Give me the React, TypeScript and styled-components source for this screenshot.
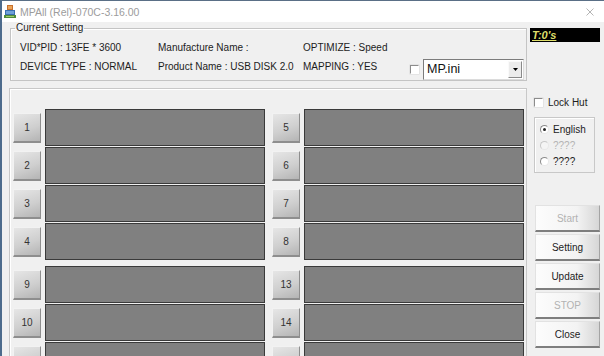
import React from 'react';
import styled, { createGlobalStyle } from 'styled-components';

const GlobalStyle = createGlobalStyle`
  html, body {
    margin: 0;
    padding: 0;
    background: #f0f0f0;
  }
  body {
    font-family: 'Liberation Sans Narrow', 'Liberation Sans', Arial, sans-serif;
    font-size: 10px;
    color: #1c1c1c;
  }
  #root {
    width: 604px;
    height: 356px;
    overflow: hidden;
  }
`;

const Window = styled.div`
  width: 604px;
  height: 356px;
  box-sizing: border-box;
  display: flex;
  flex-direction: column;
  background: #f0f0f0;
  border-left: 2px solid #4d6b8c;
  border-top: 1px solid #5a6f86;
  overflow: hidden;
`;

const TitleBar = styled.div`
  height: 21px;
  flex: none;
  display: flex;
  align-items: center;
  padding: 0 10px 0 2px;
  background: #ffffff;
`;

const Title = styled.span`
  margin-left: 4px;
  font-size: 10.5px;
  color: #9c9c9c;
`;

const CloseBtn = styled.svg`
  margin-left: auto;
`;

const Body = styled.div`
  flex: 1;
  display: flex;
  padding: 0 4px 0 7px;
  min-height: 0;
`;

const MainCol = styled.div`
  width: 518px;
  display: flex;
  flex-direction: column;
`;

const GroupBox = styled.fieldset`
  margin: 0 0 0 1px;
  padding: 0 2px 1px 9px;
  border: 1px solid #c4c4c4;
  box-shadow: inset 1px 1px 0 #ffffff;
  min-width: 0;
`;

const Legend = styled.legend`
  margin-left: -5px;
  padding: 0 1px;
  line-height: 12px;
  font-size: 10px;
`;

const SettingGrid = styled.div`
  display: grid;
  grid-template-columns: 138px 145px 1fr;
  grid-template-rows: 20px 22px;
  padding-top: 3px;
  align-items: center;
`;

const Cell = styled.div<{ $lift?: boolean }>`
  display: flex;
  align-items: center;
  white-space: nowrap;
  padding-bottom: ${(p) => (p.$lift ? '4px' : '0')};
`;

const MapCell = styled.div`
  display: flex;
  align-items: center;
  height: 22px;
`;

const MapText = styled.span`
  padding-bottom: 4px;
`;

const ClassicCheck = styled.span`
  display: inline-block;
  width: 9px;
  height: 9px;
  box-sizing: border-box;
  background: #ffffff;
  border-top: 1px solid #8c8c8c;
  border-left: 1px solid #8c8c8c;
  border-bottom: 1px solid #ffffff;
  border-right: 1px solid #ffffff;
  box-shadow: 0 0 0 0.5px #d8d8d8;
`;

const ComboWrap = styled.div`
  margin-left: auto;
  display: flex;
  align-items: center;
  gap: 4px;
  padding-top: 2px;
`;

const Combo = styled.div`
  width: 101px;
  height: 21px;
  box-sizing: border-box;
  display: flex;
  align-items: center;
  background: #ffffff;
  border-top: 1px solid #7c7c7c;
  border-left: 1px solid #7c7c7c;
  border-bottom: 1px solid #dcdcdc;
  border-right: 1px solid #dcdcdc;
  padding: 1px;
`;

const ComboText = styled.span`
  flex: 1;
  padding-left: 2px;
  font-family: 'Liberation Sans', Arial, sans-serif;
  font-size: 12.5px;
  color: #111;
`;

const ComboArrow = styled.div`
  width: 14px;
  height: 17px;
  box-sizing: border-box;
  display: flex;
  align-items: center;
  justify-content: center;
  background: #ececec;
  border-top: 1px solid #fafafa;
  border-left: 1px solid #fafafa;
  border-right: 1px solid #8a8a8a;
  border-bottom: 1px solid #8a8a8a;
`;

const Panel = styled.div`
  flex: 1;
  margin-top: 7px;
  border-top: 1px solid #c8c8c8;
  border-left: 1px solid #c8c8c8;
  border-right: 1px solid #c8c8c8;
  box-shadow: inset 1px 1px 0 #ffffff;
  padding: 20px 2px 0 3px;
  display: grid;
  grid-template-columns: 252px 252px;
  column-gap: 7px;
  align-content: start;
`;

const PortCol = styled.div`
  display: flex;
  flex-direction: column;
  gap: 6px;
`;

const PortGroup = styled.div`
  display: flex;
  flex-direction: column;
  gap: 1px;
`;

const PortRow = styled.div`
  height: 37px;
  display: flex;
  align-items: center;
  gap: 4px;
`;

const PortButton = styled.div`
  width: 28px;
  height: 30px;
  flex: none;
  box-sizing: border-box;
  display: flex;
  align-items: center;
  justify-content: center;
  font-size: 10px;
  color: #333;
  background: linear-gradient(160deg, #e6e6e6 0%, #cfcfcf 55%, #b4b4b4 100%);
  border-top: 1px solid #f2f2f2;
  border-left: 1px solid #f2f2f2;
  border-right: 1px solid #8e8e8e;
  border-bottom: 2px solid #8e8e8e;
`;

const PortBar = styled.div`
  flex: 1;
  height: 37px;
  box-sizing: border-box;
  background: #808080;
  border: 1px solid #3a3a3a;
`;

const SideCol = styled.div`
  width: 70px;
  margin-left: 3px;
  padding-top: 6px;
  display: flex;
  flex-direction: column;
`;

const Timer = styled.div`
  height: 14px;
  background: #000000;
  display: flex;
  align-items: center;
  padding-left: 2px;
  font-family: 'Liberation Sans', Arial, sans-serif;
  font-size: 11px;
  font-weight: bold;
  font-style: italic;
  color: #dede6a;
  text-decoration: underline;
`;

const LockRow = styled.label`
  margin-top: 52px;
  height: 16px;
  padding-left: 4px;
  display: flex;
  align-items: center;
  gap: 5px;
`;

const LangBox = styled.div`
  margin: 7px 0 0 4px;
  width: 61px;
  height: 56px;
  box-sizing: border-box;
  border: 1px solid #c8c8c8;
  box-shadow: inset 1px 1px 0 #ffffff;
  padding: 3px 0 0 5px;
  display: flex;
  flex-direction: column;
`;

const RadioRow = styled.div<{ $disabled?: boolean }>`
  height: 16px;
  display: flex;
  align-items: center;
  gap: 4px;
  color: ${(p) => (p.$disabled ? '#b4b4b4' : '#1c1c1c')};
`;

const Radio = styled.span<{ $checked?: boolean; $disabled?: boolean }>`
  width: 9px;
  height: 9px;
  box-sizing: border-box;
  border-radius: 50%;
  background: ${(p) => (p.$disabled ? '#f4f4f4' : '#ffffff')};
  border: 1px solid ${(p) => (p.$disabled ? '#c8c8c8' : '#8a8a8a')};
  border-right-color: #e8e8e8;
  border-bottom-color: #e8e8e8;
  display: flex;
  align-items: center;
  justify-content: center;
  &::after {
    content: '';
    width: 3px;
    height: 3px;
    border-radius: 50%;
    background: #222;
    display: ${(p) => (p.$checked ? 'block' : 'none')};
  }
`;

const ButtonStack = styled.div`
  margin: 32px 0 0 5px;
  display: flex;
  flex-direction: column;
  gap: 2px;
`;

const ActionButton = styled.div<{ $disabled?: boolean }>`
  width: 65px;
  height: 27px;
  box-sizing: border-box;
  display: flex;
  align-items: center;
  justify-content: center;
  font-size: 10px;
  color: ${(p) => (p.$disabled ? '#b2b2b2' : '#1c1c1c')};
  background: linear-gradient(to right, #fcfcfc 0%, #f3f3f3 65%, #d6d6d6 100%);
  border-top: 1px solid #e2e2e2;
  border-left: 1px solid #e2e2e2;
  border-right: 1px solid #a4a4a4;
  border-bottom: 2px solid #7e7e7e;
`;

const AppIcon = () => (
  <svg width="12" height="13" viewBox="0 0 12 13">
    <rect x="3" y="0" width="6" height="5" fill="#c8702c" />
    <rect x="4" y="1" width="4" height="3" fill="#e9a55a" />
    <rect x="1" y="5" width="10" height="5" fill="#3a6fb0" />
    <rect x="2" y="6" width="8" height="3" fill="#6ea0d8" />
    <rect x="0" y="10" width="12" height="3" fill="#4f8a3a" />
    <rect x="2" y="11" width="8" height="1" fill="#9fcf6a" />
  </svg>
);

const Port = ({ n }: { n: number }) => (
  <PortRow>
    <PortButton>{n}</PortButton>
    <PortBar />
  </PortRow>
);

const range = (from: number) => [from, from + 1, from + 2, from + 3];

export default function App() {
  return (
    <>
      <GlobalStyle />
      <Window>
        <TitleBar>
          <AppIcon />
          <Title>MPAll (Rel)-070C-3.16.00</Title>
          <CloseBtn width="8" height="8" viewBox="0 0 8 8">
            <path d="M0.5 0.5 L7.5 7.5 M7.5 0.5 L0.5 7.5" stroke="#b4b4b4" strokeWidth="1" />
          </CloseBtn>
        </TitleBar>
        <Body>
          <MainCol>
            <GroupBox>
              <Legend>Current Setting</Legend>
              <SettingGrid>
                <Cell>VID*PID : 13FE * 3600</Cell>
                <Cell>Manufacture Name :</Cell>
                <Cell>OPTIMIZE : Speed</Cell>
                <Cell $lift>DEVICE TYPE : NORMAL</Cell>
                <Cell $lift>Product Name : USB DISK 2.0</Cell>
                <MapCell>
                  <MapText>MAPPING : YES</MapText>
                  <ComboWrap>
                    <ClassicCheck />
                    <Combo>
                      <ComboText>MP.ini</ComboText>
                      <ComboArrow>
                        <svg width="5" height="3" viewBox="0 0 5 3">
                          <path d="M0 0 H5 L2.5 3 Z" fill="#000" />
                        </svg>
                      </ComboArrow>
                    </Combo>
                  </ComboWrap>
                </MapCell>
              </SettingGrid>
            </GroupBox>
            <Panel>
              <PortCol>
                <PortGroup>
                  {range(1).map((n) => (
                    <Port key={n} n={n} />
                  ))}
                </PortGroup>
                <PortGroup>
                  {range(9).map((n) => (
                    <Port key={n} n={n} />
                  ))}
                </PortGroup>
              </PortCol>
              <PortCol>
                <PortGroup>
                  {range(5).map((n) => (
                    <Port key={n} n={n} />
                  ))}
                </PortGroup>
                <PortGroup>
                  {range(13).map((n) => (
                    <Port key={n} n={n} />
                  ))}
                </PortGroup>
              </PortCol>
            </Panel>
          </MainCol>
          <SideCol>
            <Timer>T:0's</Timer>
            <LockRow>
              <ClassicCheck />
              Lock Hut
            </LockRow>
            <LangBox>
              <RadioRow>
                <Radio $checked />
                English
              </RadioRow>
              <RadioRow $disabled>
                <Radio $disabled />
                ????
              </RadioRow>
              <RadioRow>
                <Radio />
                ????
              </RadioRow>
            </LangBox>
            <ButtonStack>
              <ActionButton $disabled>Start</ActionButton>
              <ActionButton>Setting</ActionButton>
              <ActionButton>Update</ActionButton>
              <ActionButton $disabled>STOP</ActionButton>
              <ActionButton>Close</ActionButton>
            </ButtonStack>
          </SideCol>
        </Body>
      </Window>
    </>
  );
}
